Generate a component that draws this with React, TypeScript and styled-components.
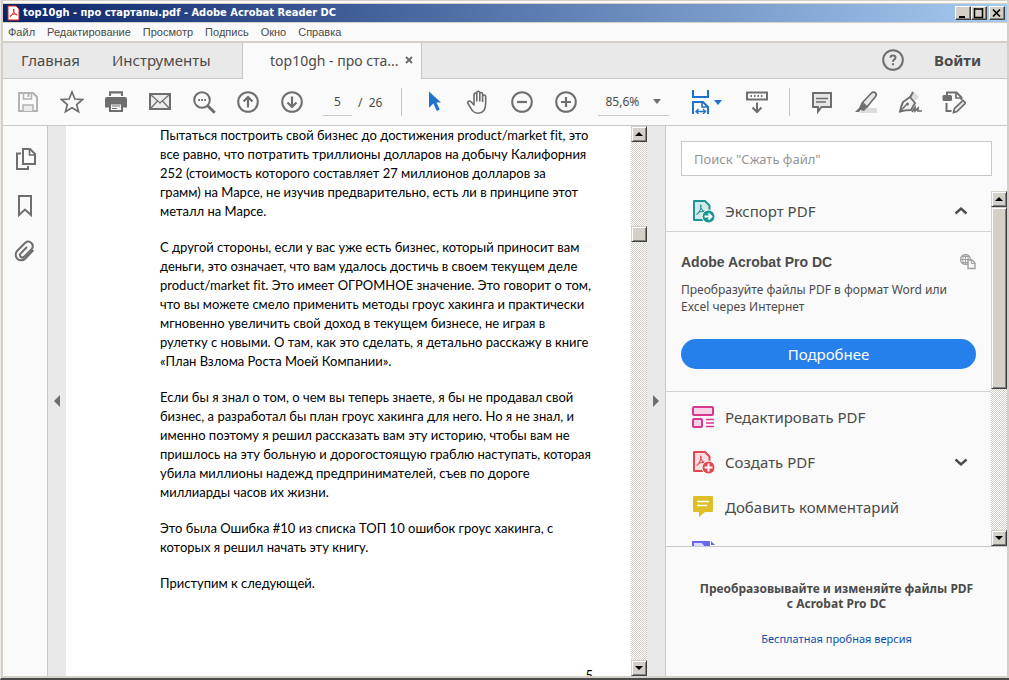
import React from "react";
import styled, { createGlobalStyle } from "styled-components";

const ui = `"Noto Sans", "Open Sans", sans-serif`;

const GlobalStyle = createGlobalStyle`
  * { box-sizing: border-box; }
  body { margin: 0; font-family: ${ui}; color: #4b4b4b; }
  button { font-family: inherit; color: inherit; border: 0; padding: 0; background: none; }
  p, h1, h2, h3 { margin: 0; }
`;

/* ---------- window frame ---------- */

const Window = styled.div`
  display: flex;
  flex-direction: column;
  height: 100vh;
  padding: 2px;
  background: #fafafa;
  border-bottom: 2px solid #4a4a4a;
  border-top: 1px solid #d4d0c8;
  border-left: 1px solid #ecebe7;
  box-shadow: inset 2px 0 #d4d0c8, inset -2px 0 #d4d0c8, inset 0 -2px #d4d0c8;
`;

const TitleBar = styled.header`
  display: flex;
  align-items: center;
  flex: none;
  height: 20px;
  padding: 0 2px 0 4px;
  gap: 3px;
  background: linear-gradient(90deg, #0a246a, #a6caf0);
  border-top: 1px solid #d4d0c8;
  border-bottom: 1px solid #d4d0c8;
`;

const Title = styled.h1`
  flex: 1;
  font: bold 11px/18px "DejaVu Sans Condensed", "DejaVu Sans", sans-serif;
  color: #fff;
  white-space: nowrap;
`;

const CaptionButtons = styled.div`
  display: flex;
`;

const CaptionButton = styled.button<{ $apart?: boolean }>`
  display: flex;
  width: 16px;
  height: 14px;
  margin-left: ${(p) => (p.$apart ? 2 : 0)}px;
  background: #d4d0c8;
  border: 1px solid;
  border-color: #fff #404040 #404040 #fff;
  box-shadow: inset -1px -1px #808080;
`;

const MenuBar = styled.nav`
  display: flex;
  align-items: center;
  flex: none;
  gap: 12px;
  height: 20px;
  padding: 0 5px;
  border-bottom: 2px solid #d4d0c8;
`;

const MenuItem = styled.button`
  font-family: "Liberation Sans", Arial, sans-serif;
  font-size: 11px;
  line-height: 18px;
`;

/* ---------- tabs ---------- */

const TabBar = styled.nav`
  display: flex;
  flex: none;
  height: 36px;
  background: #e9e9e9;
`;

const TabGroup = styled.div`
  display: flex;
  align-items: center;
  gap: 32px;
  width: 239px;
  padding: 0 0 2px 18px;
  border-bottom: 1px solid #c8c8c8;
`;

const TabLink = styled.button<{ $bold?: boolean }>`
  font-size: 15px;
  line-height: 20px;
  font-weight: ${(p) => (p.$bold ? 700 : 400)};
`;

const ActiveTab = styled.div`
  display: flex;
  align-items: center;
  justify-content: space-between;
  width: 180px;
  padding: 0 8px 2px 27px;
  background: #fafafa;
  border: solid #c8c8c8;
  border-width: 0 1px;
  font-size: 14px;
  white-space: nowrap;
`;

const IconButton = styled.button`
  display: flex;
`;

const Account = styled.div`
  display: flex;
  flex: 1;
  align-items: center;
  justify-content: flex-end;
  gap: 29px;
  padding: 0 26px 2px 0;
  border-bottom: 1px solid #c8c8c8;
`;

/* ---------- toolbar ---------- */

const ToolBar = styled.div`
  display: flex;
  align-items: center;
  flex: none;
  height: 47px;
  padding-left: 3px;
  border-bottom: 1px solid #c8c8c8;
  font-size: 12px;
`;

const ToolGroup = styled.div`
  display: flex;
  align-items: center;
`;

const ToolButton = styled.button`
  display: flex;
  align-items: center;
  justify-content: center;
  width: 44px;
  height: 36px;
`;

const PageField = styled.label`
  display: flex;
  align-items: center;
  gap: 6px;
  margin: 0 9px;
  white-space: pre;
`;

const PageInput = styled.input`
  width: 29px;
  height: 28px;
  padding: 0;
  border: 0;
  border-bottom: 1px solid #c8c8c8;
  background: none;
  color: inherit;
  font: 12px ${ui};
  text-align: center;
`;

const Divider = styled.span`
  width: 1px;
  height: 28px;
  margin: 0 10px;
  background: #c8c8c8;
`;

const ZoomField = styled.div`
  display: flex;
  align-items: center;
  width: 71px;
  height: 28px;
  margin: 0 16px 0 10px;
  border-bottom: 1px solid #c8c8c8;
`;

const ZoomSelect = styled.select`
  appearance: none;
  width: 55px;
  padding: 0 0 0 7px;
  border: 0;
  background: none;
  color: inherit;
  font: 12px ${ui};
`;

const FitButton = styled.button`
  display: flex;
  align-items: center;
  gap: 1px;
  width: 50px;
  height: 36px;
  padding-left: 4px;
`;

/* ---------- body ---------- */

const Body = styled.div`
  display: flex;
  flex: 1;
  min-height: 0;
`;

const SideRail = styled.nav`
  display: flex;
  flex-direction: column;
  flex: none;
  width: 45px;
  padding: 10px 0 0 1px;
  border-right: 1px solid #c8c8c8;
`;

const RailButton = styled.button`
  display: flex;
  align-items: center;
  justify-content: center;
  height: 46px;
`;

const Gutter = styled.button`
  display: flex;
  align-items: center;
  justify-content: center;
  flex: none;
  width: 18px;
  background: #e9e9e9;
`;

const Page = styled.main`
  flex: 1;
  min-width: 0;
  overflow: hidden;
  padding: 0 38px 0 94px;
  background: #fff;
  color: #000;
  font-family: Lato, "Open Sans", sans-serif;
  font-size: 13px;
  line-height: 19px;
  font-variant-ligatures: none;
  white-space: nowrap;
`;

const Paragraph = styled.p`
  margin-bottom: 17px;
`;

const PageNumber = styled.p`
  padding-top: 56px;
  text-align: right;
`;

/* ---------- scroll bar ---------- */

const ScrollBar = styled.div`
  display: flex;
  flex-direction: column;
  flex: none;
  width: 16px;
  background: repeating-conic-gradient(#d4d0c8 0 25%, #fff 0 50%) 0 0 / 2px 2px;
`;

const ScrollPiece = styled.button<{ $grow?: number }>`
  display: flex;
  align-items: center;
  justify-content: center;
  flex: ${(p) => p.$grow ?? 0} 0 16px;
  background: #d4d0c8;
  border: 1px solid;
  border-color: #d4d0c8 #404040 #404040 #d4d0c8;
  box-shadow: inset 1px 1px #fff, inset -1px -1px #808080;
`;

const ScrollSpace = styled.span<{ $grow: number }>`
  flex: ${(p) => p.$grow} 0 0;
`;

/* ---------- tools panel ---------- */

const Panel = styled.aside`
  display: flex;
  flex-direction: column;
  flex: none;
  width: 342px;
  border-left: 1px solid #c8c8c8;
`;

const SearchInput = styled.input`
  flex: none;
  height: 35px;
  margin: 15px;
  padding: 0 12px;
  border: 1px solid #c8c8c8;
  background: #fff;
  font: 13px ${ui};
  &::placeholder { color: #959595; opacity: 1; }
`;

const ToolArea = styled.div`
  display: flex;
  flex: 1;
  min-height: 0;
  border-bottom: 1px solid #c8c8c8;
`;

const ToolList = styled.div`
  flex: 1;
  min-width: 0;
  overflow: hidden;
`;

const ToolRow = styled.button<{ $first?: boolean }>`
  display: flex;
  align-items: center;
  gap: 10px;
  width: 100%;
  height: ${(p) => (p.$first ? 41 : 45)}px;
  padding: 0 23px 0 25px;
  border-bottom: ${(p) => (p.$first ? "1px solid #d2d2d2" : "0")};
  font-size: 15px;
  text-align: left;
`;

const RowLabel = styled.span`
  flex: 1;
`;

const Details = styled.section`
  padding: 20px 15px 22px;
  margin-bottom: 2px;
  border-bottom: 1px solid #d2d2d2;
`;

const DetailsHead = styled.div`
  display: flex;
  align-items: center;
  justify-content: space-between;
  height: 20px;
`;

const DetailsTitle = styled.h2`
  font: bold 14px/20px "Liberation Sans", Arial, sans-serif;
`;

const DetailsText = styled.p`
  margin: 9px 0 24px;
  font-size: 12px;
  line-height: 17px;
`;

const MoreButton = styled.button`
  width: 100%;
  height: 30px;
  border-radius: 15px;
  background: #2680eb;
  color: #fff;
  font-size: 15px;
`;

const Promo = styled.footer`
  display: flex;
  flex-direction: column;
  align-items: center;
  flex: none;
  gap: 20px;
  height: 129px;
  padding-top: 34px;
  text-align: center;
`;

const PromoTitle = styled.h3`
  font: bold 12px/15px ${ui};
`;

const PromoLink = styled.a`
  color: #0d4fa8;
  font-size: 11px;
  line-height: 15px;
  text-decoration: none;
`;

/* ---------- icons ---------- */

type IconProps = { children: React.ReactNode; size?: number; color?: string };

const Icon = ({ children, size = 24, color = "#6e6e6e" }: IconProps) => (
  <svg width={size} height={size} viewBox={`0 0 ${size} ${size}`} fill="none" stroke={color} strokeWidth="2" aria-hidden="true">
    {children}
  </svg>
);

const Caret = ({ color = "#6e6e6e" }: { color?: string }) => (
  <svg width="8" height="5" viewBox="0 0 8 5" fill={color} aria-hidden="true"><path d="M0 0h8L4 5z" /></svg>
);

const SaveIcon = () => (
  <Icon color="#b3b3b3">
    <path d="M3 3h14l4 4v14H3z" fill="#fafafa" />
    <path d="M7.5 3v6h8V3" strokeWidth="1.5" /><path d="M12.5 4v3" />
    <path d="M7 21v-6h10v6" fill="#ececec" strokeWidth="1.5" />
  </Icon>
);
const StarIcon = () => (
  <Icon><path d="M12 2l2.9 7 7.6.6-5.8 4.9 1.8 7.3L12 17.8l-6.5 4 1.8-7.3L1.5 9.6 9.1 9z" strokeWidth="1.7" /></Icon>
);
const PrintIcon = () => (
  <Icon>
    <path d="M5 1.5h14v4H5z" fill="#6e6e6e" stroke="none" /><path d="M6 6V2.5h12V6" fill="#fafafa" />
    <path d="M3 7h18q2 0 2 2v8.5h-4v-4H5v4H1V9q0-2 2-2z" fill="#6e6e6e" stroke="none" />
    <path d="M6 13v8h12v-8" fill="#fafafa" /><path d="M5 13.5h14" />
    <path d="M8 16h8M8 18.5h5" strokeWidth="1.2" />
  </Icon>
);
const MailIcon = () => (
  <Icon>
    <rect x="2" y="4" width="20" height="15" fill="#ececec" />
    <path d="M3 5l9 8 9-8M3 18l6.5-7M21 18l-6.5-7" strokeWidth="1.2" />
  </Icon>
);
const FindIcon = () => (
  <Icon>
    <circle cx="10" cy="10" r="7.8" /><path d="M15.7 15.7l7 7" strokeWidth="3" />
    <path d="M6.2 10h1.8M9.2 10h1.8M12.2 10h1.8" strokeWidth="1.8" />
  </Icon>
);
const ArrowCircle = ({ down }: { down?: boolean }) => (
  <Icon>
    <circle cx="12" cy="12" r="9.8" />
    {down ? <path d="M12 6.5V17M7.5 12.5L12 17l4.5-4.5" strokeWidth="2.2" /> : <path d="M12 17.5V7M7.5 11.5L12 7l4.5 4.5" strokeWidth="2.2" />}
  </Icon>
);
const CursorIcon = () => (
  <Icon color="none"><path d="M7 1.5v16.3l4.4-4.2 3.4 7.4 3-1.4-3.4-7.2H19z" fill="#1f72cb" /></Icon>
);
const HandIcon = () => (
  <Icon>
    <path d="M8 13V4.700q0-1.600 1.400-1.600t1.400 1.600V11V2.800q0-1.600 1.500-1.600t1.500 1.600V11V4q0-1.500 1.400-1.500T16.600 4v7.500V6.500q0-1.500 1.500-1.500t1.600 1.500V13c0 6-2 10.200-7.500 10.200-4.200 0-5.700-1.700-7.200-4.700L2 13.500q-.8-1.600.6-2.300 1.300-.6 2.400.6L8 15z" fill="#fafafa" strokeWidth="1.6" strokeLinejoin="round" />
  </Icon>
);
const RoundSign = ({ plus }: { plus?: boolean }) => (
  <Icon><circle cx="12" cy="12" r="9.8" /><path d={plus ? "M7 12h10M12 7v10" : "M7 12h10"} strokeWidth="2.2" /></Icon>
);
const FitIcon = () => (
  <Icon color="#1f72cb">
    <path d="M4 0v7h15V0" />
    <path d="M4 24V12h10l5 5v7" /><path d="M13 11.5V17h6" strokeWidth="1.6" />
    <path d="M7 21.5h9M9.5 19L7 21.5 9.5 24M14 19l2.5 2.5L14 24" strokeWidth="1.4" />
  </Icon>
);
const ScrollModeIcon = () => (
  <Icon>
    <rect x="2" y="2.5" width="20" height="7" fill="#fafafa" />
    <path d="M5.5 6h13" strokeDasharray="1.5 2" /><path d="M12 12.5v9M7.5 17.5L12 22l4.5-4.5" />
  </Icon>
);
const CommentIcon = () => (
  <Icon>
    <path d="M3 3h18v14h-9.5L8 21.5V17H3z" fill="#e6e6e6" /><path d="M6 8.5h12M6 12h10" strokeWidth="1.4" />
  </Icon>
);
const MarkerIcon = () => (
  <Icon>
    <path d="M10 18h13v5H5z" fill="#dcdcdc" stroke="none" />
    <path d="M8.5 12.5L17.5 3a2.6 2.6 0 0 1 4 3.5L13 17z" fill="#e6e6e6" strokeWidth="1.7" />
    <path d="M7.5 12.5l5.5 5-3 3.5-3.5-1L5 22H1l4-4z" fill="#6e6e6e" stroke="none" />
  </Icon>
);
const PenIcon = () => (
  <Icon>
    <path d="M2 21.5q1-5 3-9.500l7-5 5 6-4 7q-5.500 0-11 1.500z" fill="#f3f3f3" strokeWidth="1.9" />
    <path d="M2 21.500l7-7.500" strokeWidth="1.4" /><circle cx="9.5" cy="14" r="1.5" fill="#6e6e6e" stroke="none" />
    <path d="M13 6l2.500-4.500L21 7l-4 4z" fill="#dcdcdc" stroke="none" /><path d="M12 7.500l3-5.500" strokeWidth="1.9" />
    <path d="M14 22l3-4.500v3.500l3-3v3h4" strokeWidth="1.700" />
  </Icon>
);
const ConvertIcon = () => (
  <Icon>
    <path d="M5 5V2.500h9.500l5 5V10" strokeWidth="1.9" /><path d="M14 2v6h6" strokeWidth="1.7" />
    <rect x="0.5" y="5" width="9.500" height="6" rx="1.5" fill="#6e6e6e" stroke="none" />
    <path d="M4.500 13v8H9.500" /><path d="M11.500 22.500l1-4 8.500-8 2.500 2.500-8.500 8.500z" fill="#e6e6e6" strokeWidth="1.7" />
  </Icon>
);
const HelpIcon = () => (
  <Icon>
    <circle cx="12" cy="12" r="9.8" />
    <path d="M9.5 9.8q0-2.300 2.500-2.300t2.500 2q0 1.300-1.300 2-1.200.7-1.200 2.200M12 15.200v2" />
  </Icon>
);
const PagesIcon = () => (
  <Icon>
    <path d="M9 2h7l5 5v10H9z" fill="#fafafa" /><path d="M15.500 2v6H21" strokeWidth="1.6" />
    <path d="M7 6.500H3V22h11v-3" />
  </Icon>
);
const BookmarkIcon = () => <Icon><path d="M5 3h12v19l-6-5.500L5 22z" /></Icon>;
const ClipIcon = () => (
  <Icon>
    <path d="M20.400 11.100l-8.200 8.600a5 5 0 0 1-7.900-7.900l8.200-8.200a4.500 4.500 0 0 1 6.300 6.300l-7.700 7.900a2.300 2.300 0 0 1-3.400-3.400l6.300-6.400" transform="translate(-1 0)" />
  </Icon>
);
const Chevron = ({ up }: { up?: boolean }) => (
  <Icon size={14} color="#4b4b4b"><path d={up ? "M1.5 9.5L7 4.5l5.5 5" : "M1.5 4.5L7 9.5l5.5-5"} strokeWidth="2.4" /></Icon>
);

const PdfFile = ({ color, tint, plus }: { color: string; tint: string; plus?: boolean }) => (
  <Icon color={color}>
    <path d="M3 2h11l4.500 4.500V21H3z" fill={tint} strokeLinejoin="round" />
    <path d="M9.500 6c1.800 0-.3 7-3.800 9.500 2-3 7-4.200 8.800-2.700-1.500 1.200-5.300-3-5-6.800z" strokeWidth="1.1" />
    <circle cx="17.500" cy="17.500" r="6.500" fill={color} stroke="#fafafa" strokeWidth="1" />
    {plus ? <path d="M13.500 17.500h8M17.500 13.500v8" stroke="#fff" /> : <path d="M13.500 17.500h7M17.500 14.500l3 3-3 3" stroke="#fff" strokeWidth="1.8" />}
  </Icon>
);
const EditPdfIcon = () => (
  <Icon color="#d83790">
    <rect x="2" y="2" width="20" height="8" rx="1" fill="#f6d3e5" /><rect x="2" y="14" width="9" height="8" rx="1" fill="#f6d3e5" />
    <path d="M15 14.500h8M15 18h8M15 21.500h8" strokeWidth="1.3" />
  </Icon>
);
const NoteIcon = () => (
  <Icon color="none">
    <path d="M3.500 1h17.500q1 0 1 1v14q0 1-1 1h-7l-6 5v-5H3.500q-1.500 0-1.500-1V2q0-1 1.500-1z" fill="#dfbf28" />
    <path d="M6 6.500h12M6 10.500h10" stroke="#fff" strokeWidth="1.5" />
  </Icon>
);
const CombineIcon = () => (
  <Icon color="#6767ec">
    <path d="M2 20V2h9l3 3v15z" fill="#dcdcfb" /><path d="M11 1h8v19h-4V5z" fill="#6767ec" stroke="none" /><path d="M20 1l4 4h-4z" fill="#6767ec" stroke="none" />
  </Icon>
);
const AcrobatIcon = () => (
  <svg width="13" height="16" viewBox="0 0 13 16" fill="#fff" stroke="#e2231a" aria-hidden="true">
    <path d="M1 1h8l3 3v11H1z" /><path d="M6.500 4c1.500 0-.2 6-3.500 7.500 1.500-2.500 6-3.200 7.200-1.700-1.500 1-4.200-2.800-3.700-5.800z" />
  </svg>
);
const WebFileIcon = () => (
  <Icon size={17} color="#a0a0a0">
    <circle cx="6.500" cy="5.500" r="5" strokeWidth="1.2" /><path d="M1 5.500h11M6.500 0v11M2.500 2.500h8M2.500 8.500h8" strokeWidth="1" />
    <ellipse cx="6.500" cy="5.500" rx="2.700" ry="5" strokeWidth="1" />
    <path d="M9 6h4l3 3v5.500H9z" fill="#f5f5f5" strokeWidth="1.4" /><path d="M12.500 6v3.500H16" strokeWidth="1" />
  </Icon>
);
const GutterArrow = ({ right }: { right?: boolean }) => (
  <svg width="7" height="12" viewBox="0 0 7 12" fill="#6e6e6e" aria-hidden="true"><path d={right ? "M0 0l6 6-6 6z" : "M6 0L0 6l6 6z"} /></svg>
);
const ScrollArrow = ({ down }: { down?: boolean }) => (
  <svg width="8" height="4" viewBox="0 0 8 4" fill="#000" aria-hidden="true"><path d={down ? "M0 0h8L4 4z" : "M0 4h8L4 0z"} /></svg>
);

/* ---------- content ---------- */

const menus = ["Файл", "Редактирование", "Просмотр", "Подпись", "Окно", "Справка"];

const paragraphs = [
  [
    "Пытаться построить свой бизнес до достижения product/market fit, это",
    "все равно, что потратить триллионы долларов на добычу Калифорния",
    "252 (стоимость которого составляет 27 миллионов долларов за",
    "грамм) на Марсе, не изучив предварительно, есть ли в принципе этот",
    "металл на Марсе.",
  ],
  [
    "С другой стороны, если у вас уже есть бизнес, который приносит вам",
    "деньги, это означает, что вам удалось достичь в своем текущем деле",
    "product/market fit. Это имеет ОГРОМНОЕ значение. Это говорит о том,",
    "что вы можете смело применить методы гроус хакинга и практически",
    "мгновенно увеличить свой доход в текущем бизнесе, не играя в",
    "рулетку с новыми. О там, как это сделать, я детально расскажу в книге",
    "«План Взлома Роста Моей Компании».",
  ],
  [
    "Если бы я знал о том, о чем вы теперь знаете, я бы не продавал свой",
    "бизнес, а разработал бы план гроус хакинга для него. Но я не знал, и",
    "именно поэтому я решил рассказать вам эту историю, чтобы вам не",
    "пришлось на эту больную и дорогостоящую граблю наступать, которая",
    "убила миллионы надежд предпринимателей, съев по дороге",
    "миллиарды часов их жизни.",
  ],
  ["Это была Ошибка #10 из списка ТОП 10 ошибок гроус хакинга, с", "которых я решил начать эту книгу."],
  ["Приступим к следующей."],
];

export default function App() {
  return (
    <>
      <GlobalStyle />
      <Window>
        <TitleBar>
          <AcrobatIcon />
          <Title>top10gh - про стартапы.pdf - Adobe Acrobat Reader DC</Title>
          <CaptionButtons>
            <CaptionButton aria-label="Свернуть"><Icon size={14} color="#000"><path d="M3 10h6" /></Icon></CaptionButton>
            <CaptionButton aria-label="Развернуть"><Icon size={14} color="#000"><path d="M2.5 1v9.500h8V1M2 2h9" strokeWidth="1.5" /></Icon></CaptionButton>
            <CaptionButton aria-label="Закрыть" $apart><Icon size={14} color="#000"><path d="M3 2.500l7 7M10 2.500l-7 7" strokeWidth="1.7" /></Icon></CaptionButton>
          </CaptionButtons>
        </TitleBar>

        <MenuBar>{menus.map((m) => <MenuItem key={m}>{m}</MenuItem>)}</MenuBar>

        <TabBar>
          <TabGroup>
            <TabLink>Главная</TabLink>
            <TabLink>Инструменты</TabLink>
          </TabGroup>
          <ActiveTab>
            top10gh - про ста...
            <IconButton aria-label="Закрыть вкладку"><Icon size={8}><path d="M1 1l6 6M7 1L1 7" /></Icon></IconButton>
          </ActiveTab>
          <Account>
            <IconButton aria-label="Помощь"><HelpIcon /></IconButton>
            <TabLink $bold>Войти</TabLink>
          </Account>
        </TabBar>

        <ToolBar>
          <ToolGroup>
            <ToolButton aria-label="Сохранить"><SaveIcon /></ToolButton>
            <ToolButton aria-label="Избранное"><StarIcon /></ToolButton>
            <ToolButton aria-label="Печать"><PrintIcon /></ToolButton>
            <ToolButton aria-label="Почта"><MailIcon /></ToolButton>
            <ToolButton aria-label="Найти"><FindIcon /></ToolButton>
            <ToolButton aria-label="Предыдущая страница"><ArrowCircle /></ToolButton>
            <ToolButton aria-label="Следующая страница"><ArrowCircle down /></ToolButton>
          </ToolGroup>
          <PageField>
            <PageInput defaultValue="5" aria-label="Страница" />
            <span>/  26</span>
          </PageField>
          <Divider />
          <ToolGroup>
            <ToolButton aria-label="Выделение"><CursorIcon /></ToolButton>
            <ToolButton aria-label="Рука"><HandIcon /></ToolButton>
            <ToolButton aria-label="Уменьшить"><RoundSign /></ToolButton>
            <ToolButton aria-label="Увеличить"><RoundSign plus /></ToolButton>
          </ToolGroup>
          <ZoomField>
            <ZoomSelect aria-label="Масштаб"><option>85,6%</option></ZoomSelect>
            <Caret />
          </ZoomField>
          <ToolGroup>
            <FitButton aria-label="По ширине"><FitIcon /><Caret color="#1f72cb" /></FitButton>
            <ToolButton aria-label="Режим прокрутки"><ScrollModeIcon /></ToolButton>
          </ToolGroup>
          <Divider />
          <ToolGroup>
            <ToolButton aria-label="Комментарий"><CommentIcon /></ToolButton>
            <ToolButton aria-label="Маркер"><MarkerIcon /></ToolButton>
            <ToolButton aria-label="Подпись"><PenIcon /></ToolButton>
            <ToolButton aria-label="Преобразовать"><ConvertIcon /></ToolButton>
          </ToolGroup>
        </ToolBar>

        <Body>
          <SideRail>
            <RailButton aria-label="Миниатюры"><PagesIcon /></RailButton>
            <RailButton aria-label="Закладки"><BookmarkIcon /></RailButton>
            <RailButton aria-label="Вложения"><ClipIcon /></RailButton>
          </SideRail>
          <Gutter aria-label="Показать панель навигации"><GutterArrow /></Gutter>
          <Page>
            {paragraphs.map((lines) => (
              <Paragraph key={lines[0]}>
                {lines.map((line) => <React.Fragment key={line}>{line}<br /></React.Fragment>)}
              </Paragraph>
            ))}
            <PageNumber>5</PageNumber>
          </Page>
          <ScrollBar>
            <ScrollPiece aria-label="Вверх"><ScrollArrow /></ScrollPiece>
            <ScrollSpace $grow={84} />
            <ScrollPiece aria-label="Ползунок" />
            <ScrollSpace $grow={418} />
            <ScrollPiece aria-label="Вниз"><ScrollArrow down /></ScrollPiece>
          </ScrollBar>
          <Gutter aria-label="Скрыть панель инструментов"><GutterArrow right /></Gutter>

          <Panel>
            <SearchInput aria-label="Поиск" placeholder={'Поиск "Сжать файл"'} />
            <ToolArea>
              <ToolList>
                <ToolRow $first>
                  <PdfFile color="#1f9696" tint="#d2eaea" /><RowLabel>Экспорт PDF</RowLabel><Chevron up />
                </ToolRow>
                <Details>
                  <DetailsHead><DetailsTitle>Adobe Acrobat Pro DC</DetailsTitle><WebFileIcon /></DetailsHead>
                  <DetailsText>Преобразуйте файлы PDF в формат Word или<br />Excel через Интернет</DetailsText>
                  <MoreButton>Подробнее</MoreButton>
                </Details>
                <ToolRow><EditPdfIcon /><RowLabel>Редактировать PDF</RowLabel></ToolRow>
                <ToolRow><PdfFile color="#e34850" tint="#fbdfe0" plus /><RowLabel>Создать PDF</RowLabel><Chevron /></ToolRow>
                <ToolRow><NoteIcon /><RowLabel>Добавить комментарий</RowLabel></ToolRow>
                <ToolRow aria-label="Объединить файлы"><CombineIcon /></ToolRow>
              </ToolList>
              <ScrollBar>
                <ScrollPiece aria-label="Вверх"><ScrollArrow /></ScrollPiece>
                <ScrollPiece $grow={166} aria-label="Ползунок" />
                <ScrollSpace $grow={141} />
                <ScrollPiece aria-label="Вниз"><ScrollArrow down /></ScrollPiece>
              </ScrollBar>
            </ToolArea>
            <Promo>
              <PromoTitle>Преобразовывайте и изменяйте файлы PDF<br />с Acrobat Pro DC</PromoTitle>
              <PromoLink href="#trial">Бесплатная пробная версия</PromoLink>
            </Promo>
          </Panel>
        </Body>
      </Window>
    </>
  );
}
